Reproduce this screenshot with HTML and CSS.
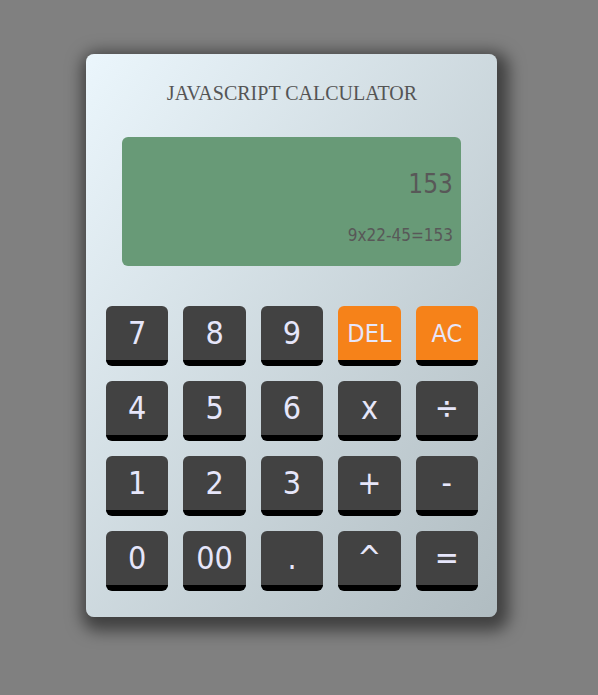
FILE: index.html
```
<!DOCTYPE html>
<html lang="en">
<head>
<meta charset="utf-8">
<title>Javascript Calculator</title>
<link rel="stylesheet" href="styles.css">
</head>
<body>
<div class="page">
  <div class="calculator">
    <h1 class="title">JAVASCRIPT CALCULATOR</h1>
    <div class="display">
      <div class="result">153</div>
      <div class="expression">9x22-45=153</div>
    </div>
    <div class="keys">
      <button class="key">7</button>
      <button class="key">8</button>
      <button class="key">9</button>
      <button class="key key-orange">DEL</button>
      <button class="key key-orange">AC</button>
      <button class="key">4</button>
      <button class="key">5</button>
      <button class="key">6</button>
      <button class="key">x</button>
      <button class="key">÷</button>
      <button class="key">1</button>
      <button class="key">2</button>
      <button class="key">3</button>
      <button class="key">+</button>
      <button class="key">-</button>
      <button class="key">0</button>
      <button class="key">00</button>
      <button class="key">.</button>
      <button class="key">^</button>
      <button class="key">=</button>
    </div>
  </div>
</div>
</body>
</html>
```
FILE: styles.css
```
html, body {
  margin: 0;
  padding: 0;
  background: #808080;
}

.page {
  padding: 54px 0 70px 86px;
}

.calculator {
  box-sizing: border-box;
  width: 411px;
  height: 563px;
  padding: 27px 19px 26px 20px;
  border-radius: 8px;
  background: linear-gradient(to bottom right, #ebf6fc, #b0bcc1);
  box-shadow: 4px 6px 16px 8px rgba(0, 0, 0, 0.5);
}

.title {
  margin: 0;
  font-family: "Liberation Serif", serif;
  font-weight: normal;
  font-size: 20px;
  line-height: 24px;
  color: #555555;
  text-align: center;
}

.display {
  box-sizing: border-box;
  height: 129px;
  margin: 32px 17px 40px 16px;
  padding: 31px 8px 0 0;
  border-radius: 6px;
  background: #689a77;
  color: #585858;
  font-family: "DejaVu Sans Condensed", "DejaVu Sans", sans-serif;
  text-align: right;
}

.result {
  font-size: 26px;
  line-height: 32px;
}

.expression {
  margin-top: 25px;
  font-size: 17px;
  line-height: 20px;
}

.keys {
  display: grid;
  grid-template-columns: repeat(5, 1fr);
  column-gap: 15px;
  row-gap: 15px;
}

.key {
  box-sizing: border-box;
  height: 60px;
  padding: 0;
  border: none;
  border-bottom: 6px solid #000000;
  border-radius: 6px;
  background: #424242;
  color: #e6e6fa;
  font-family: "DejaVu Sans Condensed", "DejaVu Sans", sans-serif;
  font-size: 32px;
  line-height: 1;
  display: flex;
  align-items: center;
  justify-content: center;
}

.key-orange {
  background: #f68219;
  font-size: 25px;
}
```
